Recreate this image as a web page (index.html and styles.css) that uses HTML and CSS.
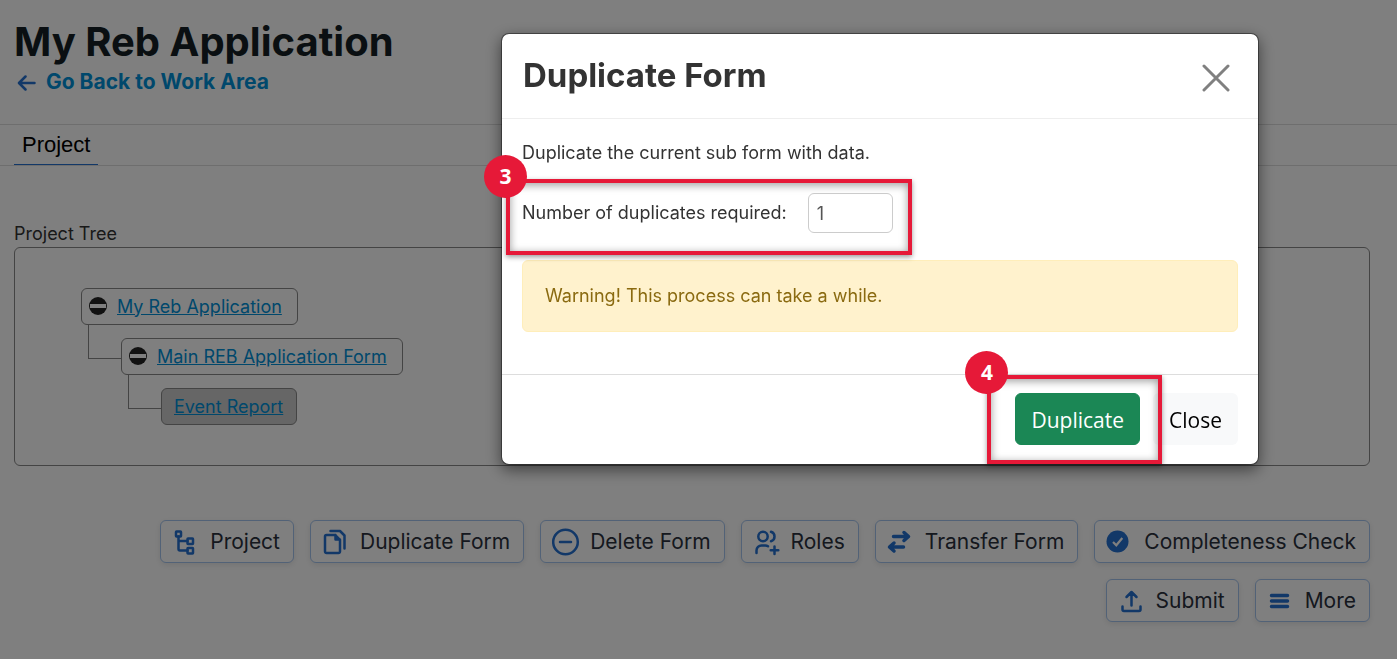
FILE: index.html
```
<!DOCTYPE html>
<html lang="en">
<head>
  <meta charset="UTF-8">
  <meta name="viewport" content="width=device-width, initial-scale=1.0">
  <title>My Reb Application</title>
  <link rel="stylesheet" href="styles.css">
</head>
<body>
  <header class="page-header">
    <h1>My Reb Application</h1>
    <a href="#" class="back-link">
      <svg width="20" height="18" viewBox="0 0 20 18" fill="none" stroke="currentColor" stroke-width="2.500" stroke-linecap="round" stroke-linejoin="round"><path d="M17.500 10H2.500M8.500 3.500L2 10l6.500 6.500"/></svg>
      Go Back to Work Area
    </a>
  </header>

  <nav class="tabs">
    <a href="#" class="tab active">Project</a>
  </nav>

  <main class="content">
    <h2 class="section-title">Project Tree</h2>
    <div class="tree-box">
      <ul class="tree">
        <li>
          <div class="node">
            <button class="toggle" aria-label="Collapse"></button>
            <a href="#">My Reb Application</a>
          </div>
          <ul>
            <li>
              <div class="node">
                <button class="toggle" aria-label="Collapse"></button>
                <a href="#">Main REB Application Form</a>
              </div>
              <ul>
                <li>
                  <div class="node current"><a href="#">Event Report</a></div>
                </li>
              </ul>
            </li>
          </ul>
        </li>
      </ul>
    </div>

    <div class="actions">
      <button class="action">
        <svg viewBox="0 0 28 28" class="line"><rect x="4" y="3.500" width="5" height="5" rx=".5"/><rect x="15.500" y="10.500" width="5.500" height="5.500" rx=".5"/><rect x="15.500" y="20" width="5.500" height="5.500" rx=".5"/><path d="M6.500 8.500v12.500a1.500 1.500 0 0 0 1.500 1.500h7.500M6.500 13h9"/></svg>
        Project
      </button>
      <button class="action">
        <svg viewBox="0 0 28 28" class="line"><path d="M4.500 7h8.500l5 5v11.500a1.500 1.500 0 0 1-1.500 1.500h-12A1.500 1.500 0 0 1 3 23.500V8.500a1.500 1.500 0 0 1 1.500-1.500zM13.500 7v4.500H18"/><path d="M8.500 3H18L22.500 7.500v13"/></svg>
        Duplicate Form
      </button>
      <button class="action">
        <svg viewBox="0 0 28 28" class="line"><circle cx="13.500" cy="14" r="12.300"/><path d="M8 14h11"/></svg>
        Delete Form
      </button>
      <button class="action">
        <svg viewBox="0 0 28 28" class="line"><circle cx="10" cy="8.500" r="4.700"/><path d="M18 3.800a4.900 4.900 0 0 1 0 9.400M3.500 25v-2.500a5 5 0 0 1 5-5h3.500a5 5 0 0 1 3 .8M21.500 18.500v7.500M17.700 22.200h7.600"/></svg>
        Roles
      </button>
      <button class="action">
        <svg viewBox="0 0 28 28" class="line thick"><path d="M6.500 8.500H20M17 4.500l4.500 4-4.500 4M16.500 19H3.500M7 15l-4.500 4 4.500 4"/></svg>
        Transfer Form
      </button>
      <button class="action">
        <svg viewBox="0 0 28 28"><circle cx="11.500" cy="13.500" r="11" fill="currentColor"/><path d="M7 14l3.300 3.300 6-7.300" fill="none" stroke="#fff" stroke-width="2.200"/></svg>
        Completeness Check
      </button>
      <button class="action">
        <svg viewBox="0 0 28 28" class="line"><path d="M13.500 18.500V5.500M8.500 10l5-5 5 5M4.500 19.500v3a1.500 1.500 0 0 0 1.500 1.500h15a1.500 1.500 0 0 0 1.500-1.500v-3"/></svg>
        Submit
      </button>
      <button class="action">
        <svg viewBox="0 0 28 28" class="line thick"><path d="M4.500 8.500h16M4.500 14h16M4.500 19.500h16"/></svg>
        More
      </button>
    </div>
  </main>

  <!-- Duplicate modal -->
  <div class="overlay">
    <div class="modal" role="dialog" aria-labelledby="modalTitle">
      <div class="modal-header">
        <h2 id="modalTitle">Duplicate Form</h2>
        <button class="close-icon" aria-label="Close">
          <svg width="28" height="28" viewBox="0 0 28 28" stroke="currentColor" stroke-width="3" stroke-linecap="round"><path d="M2 2l24 24M26 2L2 26"/></svg>
        </button>
      </div>
      <div class="modal-body">
        <p>Duplicate the current sub form with data.</p>
        <div class="field">
          <label for="copies">Number of duplicates required:</label>
          <input type="text" id="copies" value="1">
          <div class="callout callout-field"><span class="badge">3</span></div>
        </div>
        <div class="alert">Warning! This process can take a while.</div>
      </div>
      <div class="modal-footer">
        <div class="submit-wrap">
          <button class="btn btn-success">Duplicate</button>
          <div class="callout callout-submit"><span class="badge">4</span></div>
        </div>
        <button class="btn btn-light">Close</button>
      </div>
    </div>
  </div>
</body>
</html>
```

FILE: styles.css
```
/* Global Styles */
:root {
  --text-color: #333;
  --heading-color: #141e24;
  --link-color: #0090d8;
  --icon-color: #2470d0;
  --border-color: #888;
  --line-color: #ddd;
  --callout-color: #e61938;
}

* {
  box-sizing: border-box;
}

body {
  margin: 0;
  font-family: Inter, sans-serif;
  font-size: 18px;
  line-height: 24px;
  color: var(--text-color);
  background: #fff;
}

a {
  color: var(--link-color);
}

button {
  font-family: inherit;
  cursor: pointer;
}

.page-header {
  height: 124px;
  padding: 16px 14px 0;
}

.page-header h1 {
  margin: 0;
  font-size: 40px;
  line-height: 52px;
  color: var(--heading-color);
}

.back-link {
  display: inline-flex;
  align-items: center;
  gap: 9px;
  padding-left: 3px;
  font-size: 21px;
  line-height: 28px;
  font-weight: 700;
  text-decoration: none;
}

.back-link svg {
  color: var(--icon-color);
}

/* Tabs */
.tabs {
  display: flex;
  padding: 0 14px;
  border-top: 1px solid var(--line-color);
  border-bottom: 1px solid var(--line-color);
}

.tab {
  padding: 5px 8px 4px;
  border-bottom: 1px solid var(--icon-color);
  font-family: "Liberation Sans", Arial, sans-serif;
  font-size: 22px;
  line-height: 30px;
  color: #000;
  text-decoration: none;
}

.content {
  padding: 56px 27px 0 14px;
}

.section-title {
  margin: 0 0 1px;
  font-size: 18px;
  font-weight: 400;
}

/* Project tree */
.tree-box {
  padding: 40px 66px;
  border: 1px solid var(--border-color);
  border-radius: 6px;
}

.tree,
.tree ul {
  margin: 0;
  padding: 0;
  list-style: none;
}

.tree ul {
  padding: 13px 0 0 40px;
}

.tree li {
  position: relative;
}

.node {
  display: inline-flex;
  align-items: center;
  gap: 10px;
  height: 37px;
  padding: 0 15px 0 7px;
  border: 1px solid var(--border-color);
  border-radius: 6px;
  vertical-align: top;
}

.node.current {
  padding: 0 13px 0 12px;
  background: #ccc;
}

/* elbow line from the parent node */
.tree ul > li::before {
  content: "";
  position: absolute;
  top: -14px;
  left: -33px;
  width: 33px;
  height: 34px;
  border-left: 1px solid var(--border-color);
  border-bottom: 1px solid var(--border-color);
}

.toggle {
  width: 18px;
  height: 18px;
  margin-bottom: 2px;
  padding: 0 1px;
  border: 0;
  border-radius: 50%;
  background: #222;
}

.toggle::before {
  content: "";
  display: block;
  height: 4px;
  background: #fff;
}

/* Action buttons */
.actions {
  display: flex;
  flex-wrap: wrap;
  justify-content: flex-end;
  gap: 16px;
  padding: 54px 0 20px 100px;
}

.action {
  display: flex;
  align-items: center;
  gap: 10px;
  height: 43px;
  padding: 0 13px 0 11px;
  border: 1px solid #a5c5ee;
  border-radius: 6px;
  background: #fff;
  box-shadow: 0 2px 6px rgba(0, 0, 0, 0.1);
  font-size: 21px;
  color: #2a303c;
}

.action svg {
  width: 28px;
  height: 28px;
  color: var(--icon-color);
}

.line {
  fill: none;
  stroke: currentColor;
  stroke-width: 2.5;
  stroke-linecap: round;
  stroke-linejoin: round;
}

.thick {
  stroke-width: 3.5;
}

/* Modal */
.overlay {
  position: fixed;
  inset: 0;
  display: flex;
  justify-content: flex-end;
  align-items: flex-start;
  padding: 33px 138px 0 20px;
  background: rgba(0, 0, 0, 0.5);
}

.modal {
  width: 100%;
  max-width: 758px;
  border: 1px solid rgba(0, 0, 0, 0.4);
  border-radius: 8px;
  background: #fff;
  background-clip: padding-box;
  box-shadow: 0 5px 15px rgba(0, 0, 0, 0.5);
}

.modal-header {
  display: flex;
  justify-content: space-between;
  align-items: center;
  height: 85px;
  padding: 0 28px 0 21px;
  border-bottom: 1px solid #eee;
}

.modal-header h2 {
  margin: 0 0 2px;
  font-size: 33px;
  line-height: 40px;
}

.close-icon {
  height: 28px;
  margin-top: 4px;
  padding: 0;
  border: 0;
  background: none;
  color: #808080;
}

.close-icon svg {
  display: block;
}

.modal-body {
  padding: 22px 20px 42px;
}

.modal-body p {
  margin: 0 0 28px;
}

.field {
  position: relative;
  display: flex;
  align-items: center;
  gap: 21px;
  margin-bottom: 27px;
}

.field input {
  width: 85px;
  height: 40px;
  padding: 0 8px;
  border: 1px solid #ccc;
  border-radius: 6px;
  font-family: inherit;
  font-size: 18px;
  color: #555;
}

.alert {
  padding: 23px 22px;
  border: 1px solid #ffeeba;
  border-radius: 6px;
  background: #fff2cd;
  color: #8a6a10;
}

.modal-footer {
  display: flex;
  justify-content: flex-end;
  gap: 13px;
  padding: 18px 20px 19px;
  border-top: 1px solid #ddd;
}

.btn {
  height: 52px;
  padding: 2px 15px 0;
  border: 1px solid transparent;
  border-radius: 6px;
  font-family: "Open Sans", sans-serif;
  font-size: 21px;
}

.btn-success {
  border-color: #198754;
  background: #1b8755;
  color: #fff;
}

.btn-light {
  background: #f8f9fa;
  color: #000;
}

.submit-wrap {
  position: relative;
}

/* Step callouts drawn over the modal */
.callout {
  position: absolute;
  border: 4px solid var(--callout-color);
  box-shadow: 0 2px 5px rgba(0, 0, 0, 0.4), inset 0 2px 8px rgba(0, 0, 0, 0.4);
  pointer-events: none;
}

.callout-field {
  top: -14px;
  left: -16px;
  width: 406px;
  height: 76px;
}

.callout-submit {
  top: -18px;
  left: -28px;
  right: -22px;
  bottom: -19px;
}

.badge {
  position: absolute;
  top: -28px;
  left: -26px;
  width: 43px;
  height: 43px;
  border-radius: 50%;
  background: var(--callout-color);
  font-family: "Open Sans", sans-serif;
  font-size: 21px;
  font-weight: 700;
  line-height: 42px;
  text-align: center;
  color: #fff;
}
```
